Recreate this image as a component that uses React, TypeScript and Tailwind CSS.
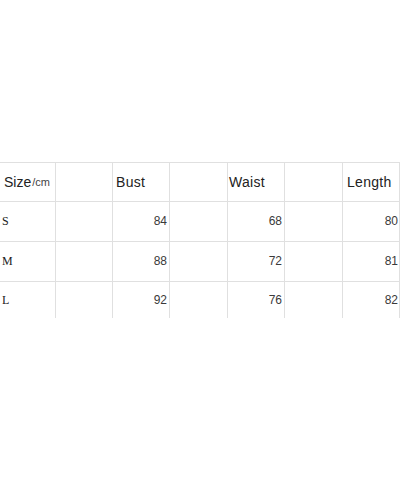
import React from "react";

const cols = "grid grid-cols-[56px_57px_57px_58px_57px_58px_57px]";
const cell = "border-r border-[#e0e0e0] flex items-center";
const num = "justify-end text-[12px] text-[#3a3a3a] font-['Liberation_Sans',Arial,sans-serif] pb-[1px]";

const rows = [
  ["S", "84", "68", "80"],
  ["M", "88", "72", "81"],
  ["L", "92", "76", "82"],
];

export default function App() {
  return (
    <div className="w-[400px] h-[480px] bg-white overflow-hidden">
      <div className="mt-[162px]">
        <div className={`${cols} h-[39px] border-t border-[#e0e0e0] text-[#222] text-[14px] tracking-[0.3px] font-['Liberation_Sans',Arial,sans-serif]`}>
          <div className={`${cell} pl-[4px] pt-[1px] tracking-normal`}>
            <span>Size</span>
            <span className="text-[11px] text-[#444] ml-[1px]">/cm</span>
          </div>
          <div className={cell} />
          <div className={`${cell} pl-[3px] pt-[1px]`}>Bust</div>
          <div className={cell} />
          <div className={`${cell} pl-[1px] pt-[1px]`}>Waist</div>
          <div className={cell} />
          <div className={`${cell} pl-[4px] pt-[1px]`}>Length</div>
        </div>
        {rows.map((r, i) => (
          <div
            key={r[0]}
            className={`${cols} ${i === 2 ? "h-[37px]" : "h-[40px]"} border-t border-[#e0e0e0]`}
          >
            <div className={`${cell} pl-[2px] text-[12px] text-[#222] font-['Liberation_Serif',serif] pb-[1px]`}>{r[0]}</div>
            <div className={cell} />
            <div className={`${cell} ${num} pr-[2px]`}>{r[1]}</div>
            <div className={cell} />
            <div className={`${cell} ${num} pr-[2px]`}>{r[2]}</div>
            <div className={cell} />
            <div className={`${cell} ${num} pr-[1px]`}>{r[3]}</div>
          </div>
        ))}
      </div>
    </div>
  );
}
